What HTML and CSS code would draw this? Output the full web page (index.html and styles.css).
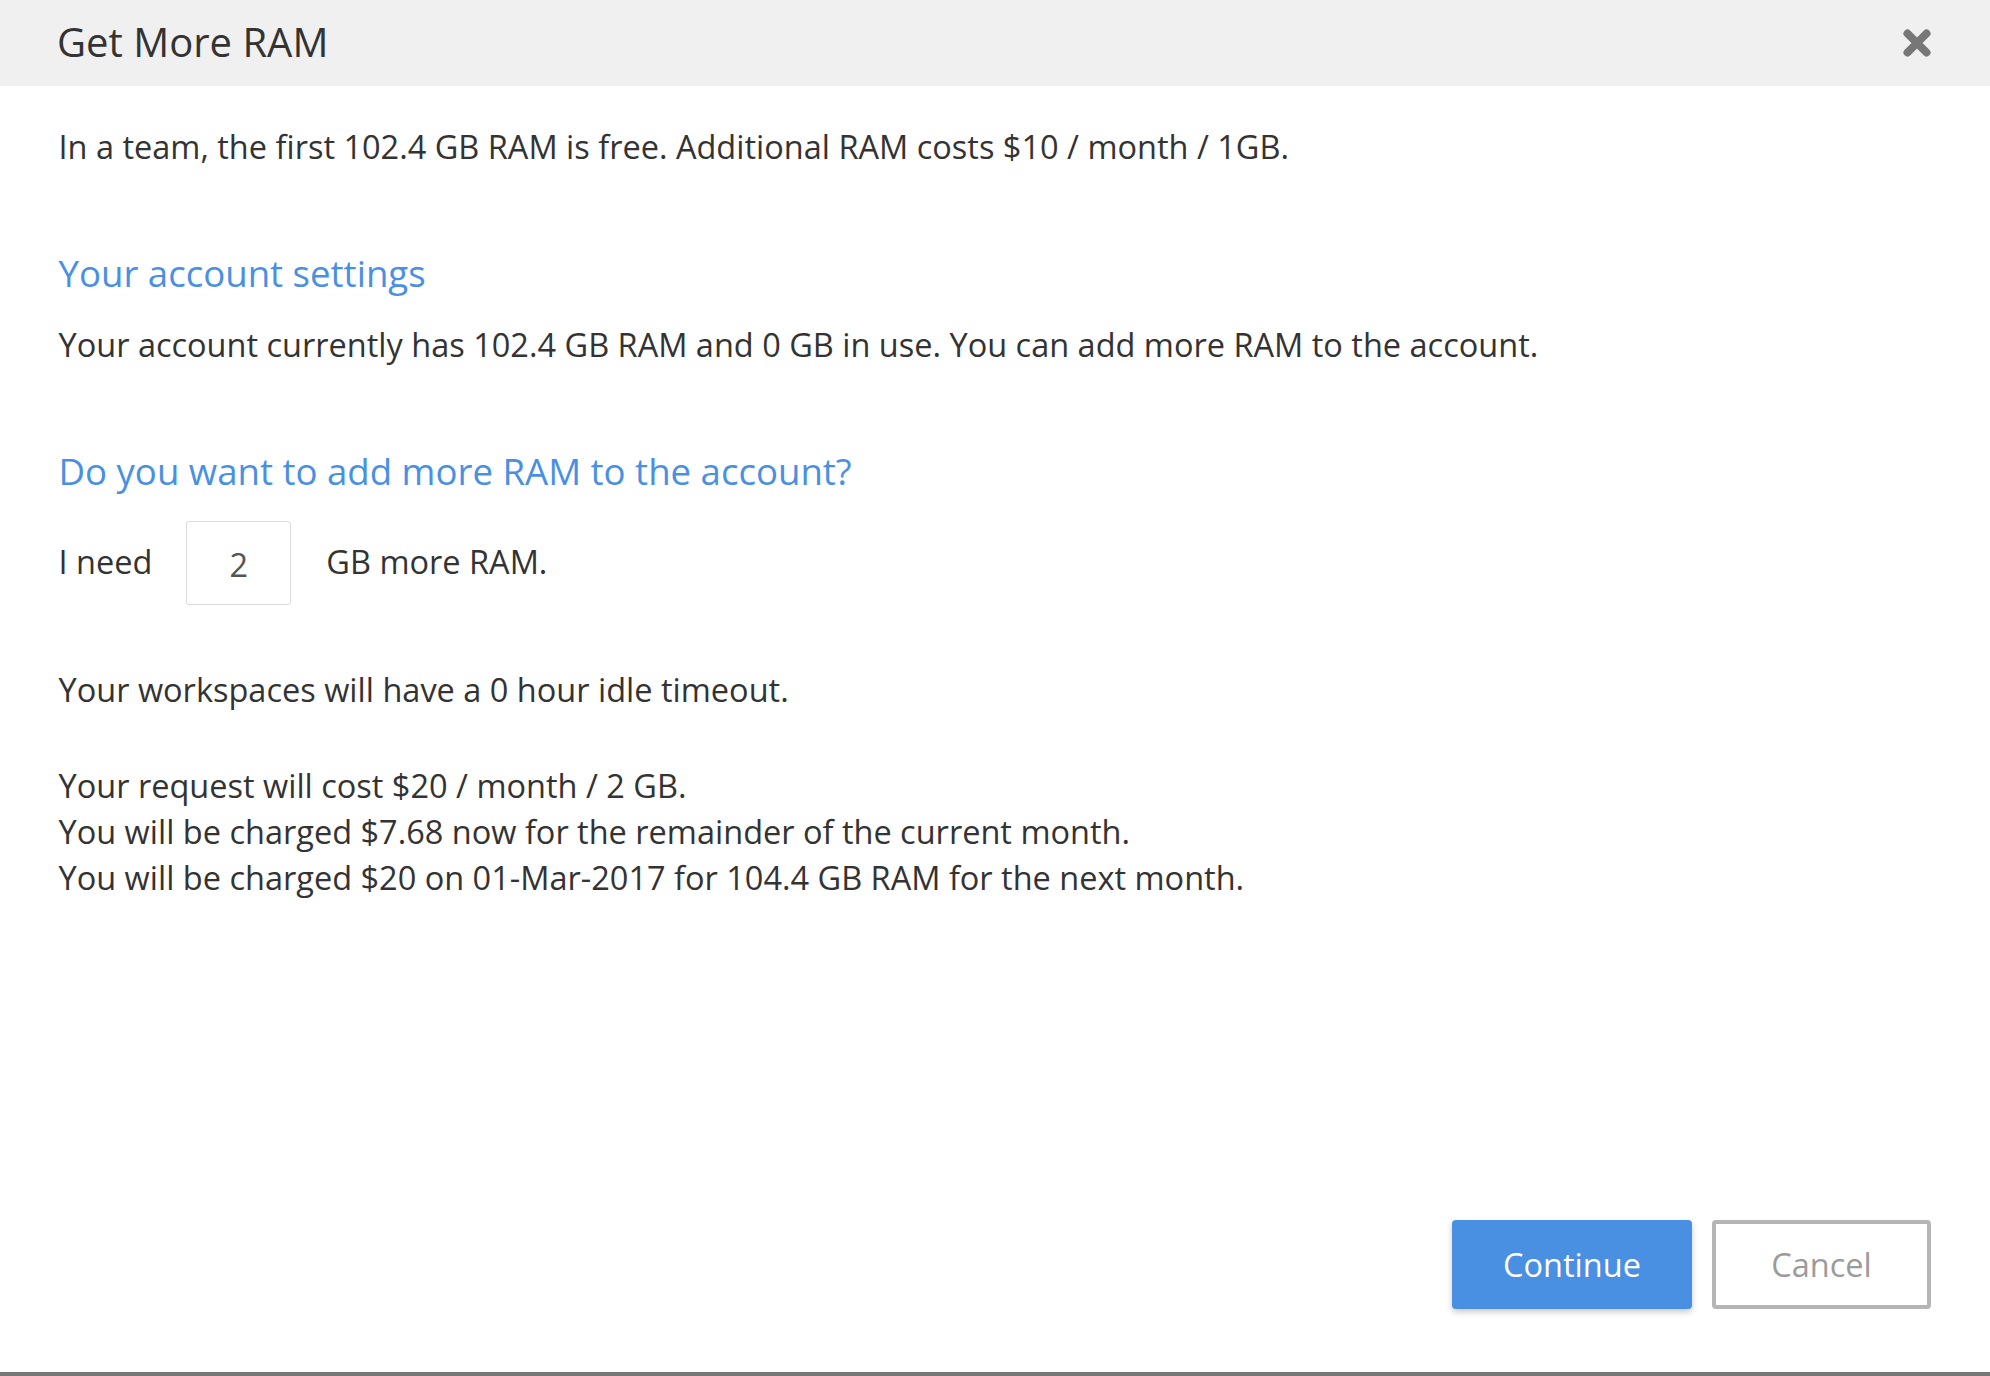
FILE: index.html
```html
<!DOCTYPE html>
<html lang="en">
<head>
<meta charset="utf-8">
<title>Get More RAM</title>
<link rel="stylesheet" href="styles.css">
</head>
<body>
<div class="modal">
  <header class="modal-header">
    <h1 class="modal-title">Get More RAM</h1>
    <button class="close" aria-label="Close">
      <svg width="28" height="28" viewBox="0 0 28 28"><path d="M4.5 4.5 L23.5 23.5 M23.5 4.5 L4.5 23.5" stroke="#777" stroke-width="8" stroke-linecap="round"/></svg>
    </button>
  </header>
  <main class="modal-body">
    <p class="text">In a team, the first 102.4 GB RAM is free. Additional RAM costs $10 / month / 1GB.</p>
    <h2 class="section-title">Your account settings</h2>
    <p class="text">Your account currently has 102.4 GB RAM and 0 GB in use. You can add more RAM to the account.</p>
    <h2 class="section-title">Do you want to add more RAM to the account?</h2>
    <div class="need-row">
      <span class="text">I need</span>
      <input class="ram-input" type="text" value="2">
      <span class="text">GB more RAM.</span>
    </div>
    <p class="text idle">Your workspaces will have a 0 hour idle timeout.</p>
    <div class="cost">
      <p class="text">Your request will cost $20 / month / 2 GB.</p>
      <p class="text">You will be charged $7.68 now for the remainder of the current month.</p>
      <p class="text">You will be charged $20 on 01-Mar-2017 for 104.4 GB RAM for the next month.</p>
    </div>
  </main>
  <footer class="modal-footer">
    <button class="btn btn-primary">Continue</button>
    <button class="btn btn-default">Cancel</button>
  </footer>
</div>
</body>
</html>
```
FILE: styles.css
```css
html, body {
  margin: 0;
  padding: 0;
  background: #fff;
}
body {
  font-family: "Open Sans", "Noto Sans", sans-serif;
  color: #333;
}
.modal {
  box-sizing: border-box;
  min-height: 100vh;
  display: flex;
  flex-direction: column;
  border-bottom: 4px solid #777;
}
.modal-header {
  height: 86px;
  box-sizing: border-box;
  background: #f0f0f0;
  display: flex;
  align-items: center;
  justify-content: space-between;
  padding: 0 59px 2px 57px;
}
.modal-title {
  margin: 0;
  font-size: 40px;
  line-height: 46px;
  font-weight: 400;
  color: #333;
}
.close {
  border: 0;
  background: transparent;
  padding: 0;
  width: 28px;
  height: 28px;
  display: flex;
  margin-top: 2px;
}
.modal-body {
  padding: 38px 56px 0 58.5px;
}
.text {
  margin: 0;
  font-size: 32.5px;
  line-height: 46px;
}
.section-title {
  margin: 78px 0 24px 0;
  font-size: 36.6px;
  line-height: 50px;
  font-weight: 400;
  color: #4a90e2;
}
.need-row {
  display: flex;
  align-items: center;
  margin-top: 25px;
}
.need-row .text {
  margin-top: -3px;
}
.ram-input {
  box-sizing: border-box;
  width: 105px;
  height: 84px;
  margin: 0 35px 0 34px;
  border: 1px solid #dcdcdc;
  border-radius: 3px;
  text-align: center;
  font-family: "Open Sans", "Noto Sans", sans-serif;
  font-size: 32.5px;
  color: #555;
  padding: 2px 0 0 0;
}
.idle {
  margin-top: 62px;
}
.cost {
  margin-top: 50px;
}
.modal-footer {
  margin-top: auto;
  display: flex;
  justify-content: flex-end;
  gap: 20px;
  padding: 0 59px 63px 0;
}
.btn {
  box-sizing: border-box;
  height: 89px;
  font-family: "Open Sans", "Noto Sans", sans-serif;
  font-size: 32.5px;
  border-radius: 4px;
  cursor: pointer;
}
.btn-primary {
  width: 240px;
  background: #4a90e2;
  color: #fff;
  border: 0;
  box-shadow: 0 3px 6px rgba(0, 0, 0, 0.22);
}
.btn-default {
  width: 219px;
  background: #fff;
  color: #9b9b9b;
  border: 4px solid #b5b5b5;
}
```
